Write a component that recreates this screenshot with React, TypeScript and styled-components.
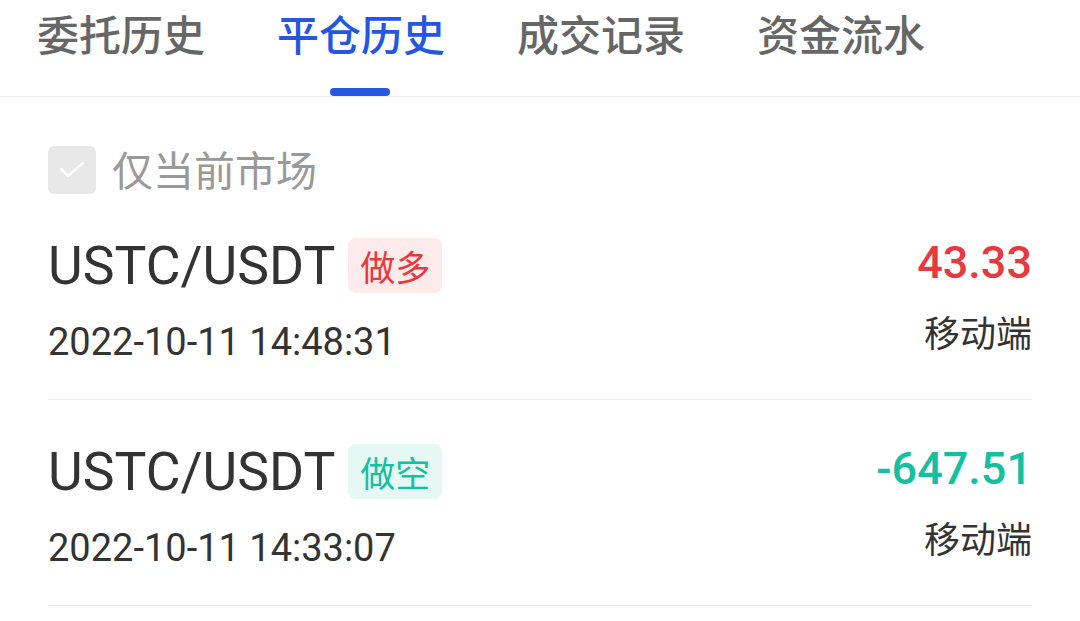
import React from 'react';
import styled, {createGlobalStyle} from "styled-components";

const tabs = ["委托历史", "平仓历史", "成交记录", "资金流水"];

const records = [
  {key: "1", pair: "USTC/USDT", side: "long", sideText: "做多", time: "2022-10-11 14:48:31", amount: "43.33", source: "移动端"},
  {key: "2", pair: "USTC/USDT", side: "short", sideText: "做空", time: "2022-10-11 14:33:07", amount: "-647.51", source: "移动端"},
];

const App = () => {
  return (
    <>
      <GlobalStyle/>
      <Page>
        <TabBar>
          {tabs.map((t, i) => (
            <Tab key={t} $active={i === 1}>
              {t}
              {i === 1 && <Indicator/>}
            </Tab>
          ))}
        </TabBar>
        <Content>
          <FilterRow>
            <CheckBox>
              <svg width="26" height="18" viewBox="0 0 26 18">
                <polyline points="2,8 9,15 24,2" fill="none" stroke="#fff" strokeWidth="2.5" strokeLinecap="round" strokeLinejoin="round"/>
              </svg>
            </CheckBox>
            <FilterLabel>仅当前市场</FilterLabel>
          </FilterRow>
          {records.map((r) => (
            <Row key={r.key}>
              <Left>
                <TitleLine>
                  <Pair>{r.pair}</Pair>
                  <SideTag $side={r.side}>{r.sideText}</SideTag>
                </TitleLine>
                <Time>{r.time}</Time>
              </Left>
              <Right>
                <Amount $side={r.side}>{r.amount}</Amount>
                <Source>{r.source}</Source>
              </Right>
            </Row>
          ))}
        </Content>
      </Page>
    </>
  );
};

const GlobalStyle = createGlobalStyle`
  body {
    margin: 0;
    background: #fff;
    font-family: Roboto, "Noto Sans CJK SC", sans-serif;
  }
`;
const Page = styled.div`
  width: 1080px;
  height: 621px;
  overflow: hidden;
  background: #fff;
`;
const TabBar = styled.div`
  display: flex;
  gap: 72px;
  height: 96px;
  padding-left: 37px;
  border-bottom: 1px solid #ececec;
`;
const Tab = styled.div<{ $active?: boolean }>`
  position: relative;
  display: flex;
  justify-content: center;
  height: 96px;
  padding-top: 5px;
  box-sizing: border-box;
  font-family: "Noto Sans CJK SC", sans-serif;
  font-size: 42px;
  font-weight: 500;
  line-height: 56px;
  color: ${(p) => (p.$active ? "#2456e0" : "#666")};
`;
const Indicator = styled.div`
  position: absolute;
  bottom: 0;
  left: 50%;
  width: 60px;
  height: 8px;
  margin-left: -31px;
  border-radius: 4px;
  background: #2456e0;
`;
const Content = styled.div`
  padding: 0 48px;
`;
const FilterRow = styled.div`
  display: flex;
  align-items: center;
  gap: 16px;
  padding-top: 49px;
`;
const CheckBox = styled.div`
  width: 48px;
  height: 48px;
  border-radius: 6px;
  background: #e8e8e8;
  display: flex;
  align-items: center;
  justify-content: center;
`;
const FilterLabel = styled.div`
  margin-top: -4px;
  font-family: "Noto Sans CJK SC", sans-serif;
  font-size: 41px;
  line-height: 48px;
  color: #999;
`;
const Row = styled.div`
  display: flex;
  justify-content: space-between;
  padding: 44px 0 35px;
  border-bottom: 1px solid #ececec;
`;
const Left = styled.div`
  display: flex;
  flex-direction: column;
`;
const TitleLine = styled.div`
  display: flex;
  align-items: center;
  gap: 13px;
  height: 55px;
`;
const Pair = styled.div`
  font-size: 53.5px;
  line-height: 55px;
  color: #333;
`;
const SideTag = styled.div<{ $side: string }>`
  height: 55px;
  padding: 0 12px;
  border-radius: 8px;
  font-family: "Noto Sans CJK SC", sans-serif;
  font-size: 35px;
  line-height: 55px;
  color: ${(p) => (p.$side === "long" ? "#e8393f" : "#14c0a0")};
  background: ${(p) => (p.$side === "long" ? "#fdeaea" : "#e5f8f4")};
`;
const Time = styled.div`
  margin-top: 27px;
  font-size: 38px;
  line-height: 44px;
  color: #333;
`;
const Right = styled.div`
  display: flex;
  flex-direction: column;
  align-items: flex-end;
`;
const Amount = styled.div<{ $side: string }>`
  font-size: 45px;
  font-weight: 500;
  line-height: 50px;
  color: ${(p) => (p.$side === "long" ? "#e8393f" : "#14c0a0")};
`;
const Source = styled.div`
  margin-top: 21px;
  font-family: "Noto Sans CJK SC", sans-serif;
  font-size: 36px;
  line-height: 44px;
  color: #333;
`;

export default App;
